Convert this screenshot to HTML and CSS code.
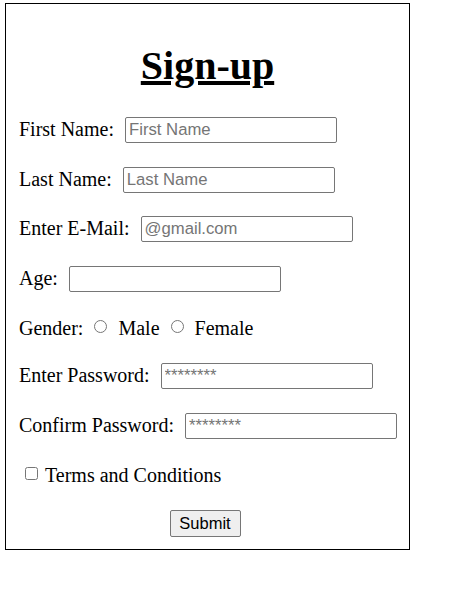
FILE: index.html
```html
<!DOCTYPE html>
<html>
<head>
<meta charset="utf-8">
<link rel="stylesheet" href="styles.css">
</head>
<body>
<form class="card">
  <h1 class="title">Sign-up</h1>
  <div class="row r1"><label class="lbl">First Name:</label><input class="field" type="text" placeholder="First Name"></div>
  <div class="row r2"><label class="lbl">Last Name:</label><input class="field" type="text" placeholder="Last Name"></div>
  <div class="row r3"><label class="lbl">Enter E-Mail:</label><input class="field" type="email" placeholder="@gmail.com"></div>
  <div class="row r4"><label class="lbl">Age:</label><input class="field" type="text"></div>
  <div class="row r5"><span class="lbl">Gender:</span><input class="radio" type="radio" name="g"><span class="lbl">Male</span><input class="radio" type="radio" name="g"><span class="lbl">Female</span></div>
  <div class="row r6"><label class="lbl">Enter Password:</label><input class="field" type="password" placeholder="********"></div>
  <div class="row r7"><label class="lbl">Confirm Password:</label><input class="field" type="password" placeholder="********"></div>
  <div class="row r8"><input class="check" type="checkbox"><span class="lbl">Terms and Conditions</span></div>
  <div class="actions"><button class="submit" type="button">Submit</button></div>
</form>
</body>
</html>
```
FILE: styles.css
```css
html, body {
  margin: 0;
  padding: 0;
  background: #ffffff;
}
body {
  font-family: "Liberation Serif", "Times New Roman", serif;
  color: #000;
}
.card {
  box-sizing: border-box;
  width: 405px;
  margin: 3px 0 0 5px;
  border: 1px solid #000;
  padding: 13px 13px 12px 13px;
}
.title {
  margin: 27px 0 0 0;
  height: 44px;
  font-size: 40px;
  line-height: 44px;
  font-weight: bold;
  text-decoration: underline;
  text-align: center;
}
.row {
  display: flex;
  align-items: center;
  height: 26px;
}
.r1 { margin-top: 29px; }
.r2 { margin-top: 24px; }
.r3 { margin-top: 23px; }
.r4 { margin-top: 24px; }
.r5 { margin-top: 24px; }
.r6 { margin-top: 21px; }
.r7 { margin-top: 24px; }
.r8 { margin-top: 24px; }
.lbl {
  font-size: 20px;
  line-height: normal;
  white-space: nowrap;
  margin-top: -2px;
}
.field {
  box-sizing: border-box;
  width: 212px;
  height: 26px;
  margin: 0 0 0 11px;
  padding: 1px 3px;
  border: 1px solid #767676;
  border-radius: 2px;
  font-family: "Liberation Sans", Arial, sans-serif;
  font-size: 16.7px;
  color: #000;
  background: #fff;
}
.field::placeholder {
  color: #757575;
}
.radio {
  width: 13px;
  height: 13px;
  margin: 0 11px 5px 11px;
}
.check {
  width: 13px;
  height: 13px;
  margin: 0 7px 5px 6px;
}
.actions {
  display: flex;
  justify-content: center;
  padding-right: 5px;
  margin-top: 21px;
}
.submit {
  box-sizing: border-box;
  width: 71px;
  height: 27px;
  padding: 0;
  background: #efefef;
  border: 1px solid #767676;
  border-radius: 2px;
  font-family: "Liberation Sans", Arial, sans-serif;
  font-size: 16.5px;
  color: #000;
}
```
